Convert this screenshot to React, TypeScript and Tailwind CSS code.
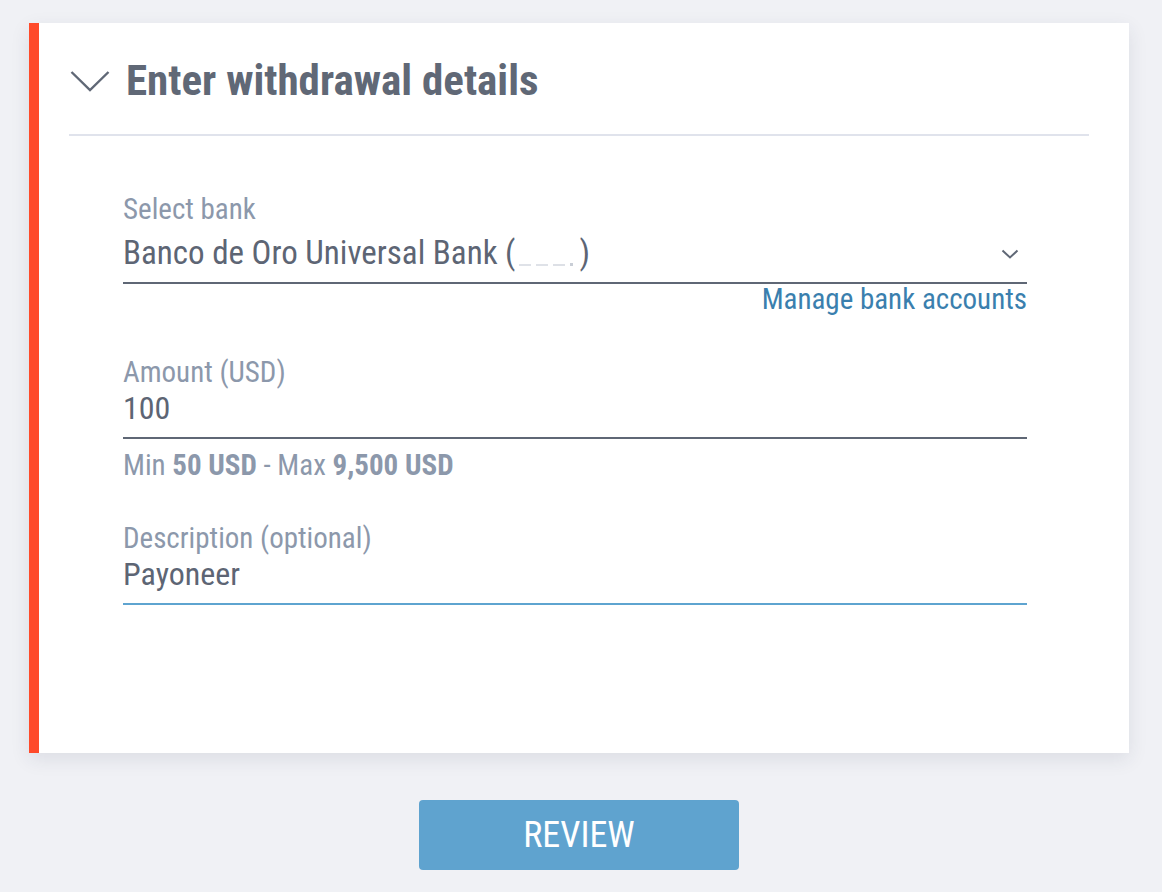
const font = { fontFamily: '"Roboto Condensed", Roboto, "Liberation Sans", sans-serif' };

function Label({ children }: { children: React.ReactNode }) {
  return <div className="text-[29px] leading-[34px] text-[#8c98ab]">{children}</div>;
}

// blurred account digits, drawn as faint dashes
function Masked() {
  return (
    <span className="inline-flex items-end gap-[5px] w-[64px] h-[20px] px-[4px] pb-[1px] align-[-2px]">
      <span className="w-[12px] h-[2px] bg-[#dfe2e8]" />
      <span className="w-[12px] h-[2px] bg-[#dfe2e8]" />
      <span className="w-[12px] h-[2px] bg-[#dde0e6]" />
      <span className="w-[3px] h-[3px] bg-[#c9ced6]" />
    </span>
  );
}

export default function App() {
  return (
    <div className="min-h-[892px] bg-[#f0f1f5] pt-[23px] pl-[29px] font-stretch-condensed" style={font}>
      <div className="w-[1100px] h-[730px] bg-white border-l-[10px] border-[#ff4a2a] shadow-[0_6px_18px_rgba(40,50,80,0.10)] pl-[30px] pr-[40px]">
        <div className="h-[113px] pt-[4px] flex items-center border-b-2 border-[#e0e3ec]">
          <svg width="40" height="22" viewBox="0 0 40 22" className="ml-[1px] mt-[1px]" fill="none">
            <path d="M1.5 2 L20 20 L38.5 2" stroke="#606876" strokeWidth="2.4" />
          </svg>
          <h1 className="ml-[16px] text-[43px] font-bold text-[#606876] leading-none">Enter withdrawal details</h1>
        </div>

        <div className="pl-[54px] w-[958px] pt-[56px]">
          <Label>Select bank</Label>
          <div className="mt-[8px] pb-[10px] flex items-center justify-between border-b-2 border-[#5f6775]">
            <span className="block h-[38px] text-[33px] leading-[38px] text-[#5d6574] whitespace-nowrap">
              Banco de Oro Universal Bank (<Masked />)
            </span>
            <svg width="18" height="10" viewBox="0 0 18 10" className="mr-[8px] mt-[1px]" fill="none">
              <path d="M1.5 1.5 L9 8.5 L16.5 1.5" stroke="#606876" strokeWidth="2" />
            </svg>
          </div>
          <div className="flex justify-end">
            <a className="text-[29px] leading-[30px] text-[#3a7fae]">Manage bank accounts</a>
          </div>

          <div className="mt-[41px]">
            <Label>Amount (USD)</Label>
            <div className="pb-[10px] border-b-2 border-[#5f6775]">
              <span className="block text-[32px] leading-[38px] text-[#5d6574]">100</span>
            </div>
            <div className="mt-[9px] text-[29px] leading-[34px] text-[#8c98ab]">
              Min <span className="font-bold">50 USD</span> - Max <span className="font-bold">9,500 USD</span>
            </div>
          </div>

          <div className="mt-[39px]">
            <Label>Description (optional)</Label>
            <div className="pb-[10px] border-b-2 border-[#5ea4d0]">
              <span className="block text-[32px] leading-[38px] text-[#5d6574]">Payoneer</span>
            </div>
          </div>
        </div>
      </div>

      <div className="w-[1100px] flex justify-center mt-[47px]">
        <button className="w-[320px] h-[70px] rounded-[4px] bg-[#5fa3cf] text-white text-[36px] font-normal">
          REVIEW
        </button>
      </div>
    </div>
  );
}
